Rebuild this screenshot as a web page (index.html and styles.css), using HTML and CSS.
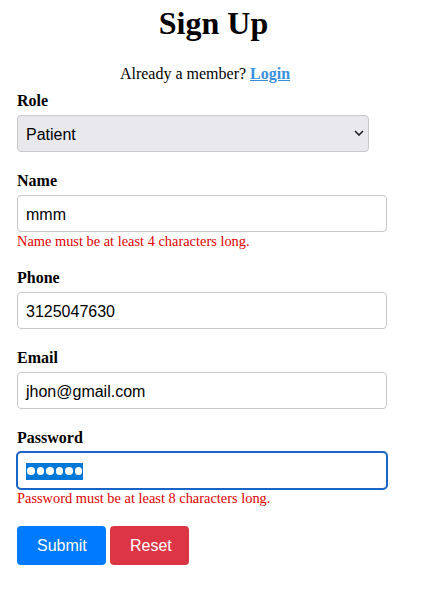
FILE: index.html
```html
<!DOCTYPE html>
<html lang="en">
<head>
<meta charset="utf-8">
<title>Sign Up</title>
<link rel="stylesheet" href="styles.css">
</head>
<body>
  <h1 class="title">Sign Up</h1>
  <p class="already">Already a member? <a href="#" class="login">Login</a></p>
  <form class="form">
    <div class="group">
      <label class="label">Role</label>
      <div class="select-wrap">
        <div class="select">Patient</div>
        <svg class="chevron" width="10" height="6" viewBox="0 0 10 6"><path d="M1 1 L5 5 L9 1" fill="none" stroke="#222" stroke-width="1.6"/></svg>
      </div>
    </div>
    <div class="group">
      <label class="label">Name</label>
      <div class="input">mmm</div>
      <div class="error">Name must be at least 4 characters long.</div>
    </div>
    <div class="group">
      <label class="label">Phone</label>
      <div class="input">3125047630</div>
    </div>
    <div class="group">
      <label class="label">Email</label>
      <div class="input">jhon@gmail.com</div>
    </div>
    <div class="group">
      <label class="label">Password</label>
      <div class="input focused"><span class="sel"><i class="dot"></i><i class="dot"></i><i class="dot"></i><i class="dot"></i><i class="dot"></i><i class="dot"></i></span></div>
      <div class="error">Password must be at least 8 characters long.</div>
    </div>
    <div class="buttons">
      <button type="button" class="btn submit">Submit</button>
      <button type="button" class="btn reset">Reset</button>
    </div>
  </form>
</body>
</html>
```
FILE: styles.css
```css
* { box-sizing: border-box; }
html, body { margin: 0; padding: 0; background: #fff; }
body {
  font-family: "Liberation Serif", "Times New Roman", serif;
  font-size: 16px;
  color: #000;
}
.title {
  margin: 5px 0 0;
  font-size: 32px;
  line-height: 36px;
  font-weight: bold;
  text-align: center;
}
.already {
  margin: 24px 25px 9px 8px;
  line-height: 18px;
  text-align: center;
}
.login {
  color: #3a8fdd;
  font-weight: bold;
  text-decoration: underline;
}
.form {
  padding: 0 17px;
}
.group {
  margin-bottom: 20px;
}
.label {
  display: block;
  font-weight: bold;
  line-height: 18px;
  margin-bottom: 5px;
}
.select-wrap {
  position: relative;
  width: 352px;
}
.select {
  height: 37px;
  border: 1px solid #c9c9cc;
  border-radius: 4px;
  background: #e9e9ed;
  padding: 1px 8px 0;
  font-family: "Liberation Sans", Arial, sans-serif;
  font-size: 16px;
  line-height: 35px;
  color: #000;
}
.chevron {
  position: absolute;
  right: 5px;
  top: 15px;
}
.input {
  width: 370px;
  height: 37px;
  border: 1px solid #c8c8c8;
  border-radius: 4px;
  background: #fff;
  padding: 1px 8px 0;
  font-family: "Liberation Sans", Arial, sans-serif;
  font-size: 16px;
  line-height: 35px;
  color: #000;
  display: flex;
  align-items: center;
}
.input.focused {
  outline: 2px solid #1b64c6;
  outline-offset: -1px;
  border-radius: 4px;
}
.sel {
  display: inline-flex;
  align-items: center;
  gap: 2px;
  background: #0078d7;
  height: 17px;
  padding: 0 1px 0 1px;
}
.dot {
  display: block;
  width: 7.5px;
  height: 7.5px;
  border-radius: 50%;
  background: #fff;
}
.error {
  margin-top: 1px;
  color: #e00000;
  font-size: 14.4px;
  line-height: 16px;
}
.buttons {
  display: flex;
  gap: 4px;
}
.btn {
  height: 39px;
  border: none;
  border-radius: 4px;
  padding: 0 20px;
  color: #fff;
  font-family: "Liberation Sans", Arial, sans-serif;
  font-size: 16px;
  cursor: pointer;
}
.submit { background: #007bff; width: 89px; }
.reset { background: #dc3545; width: 79px; }
```
